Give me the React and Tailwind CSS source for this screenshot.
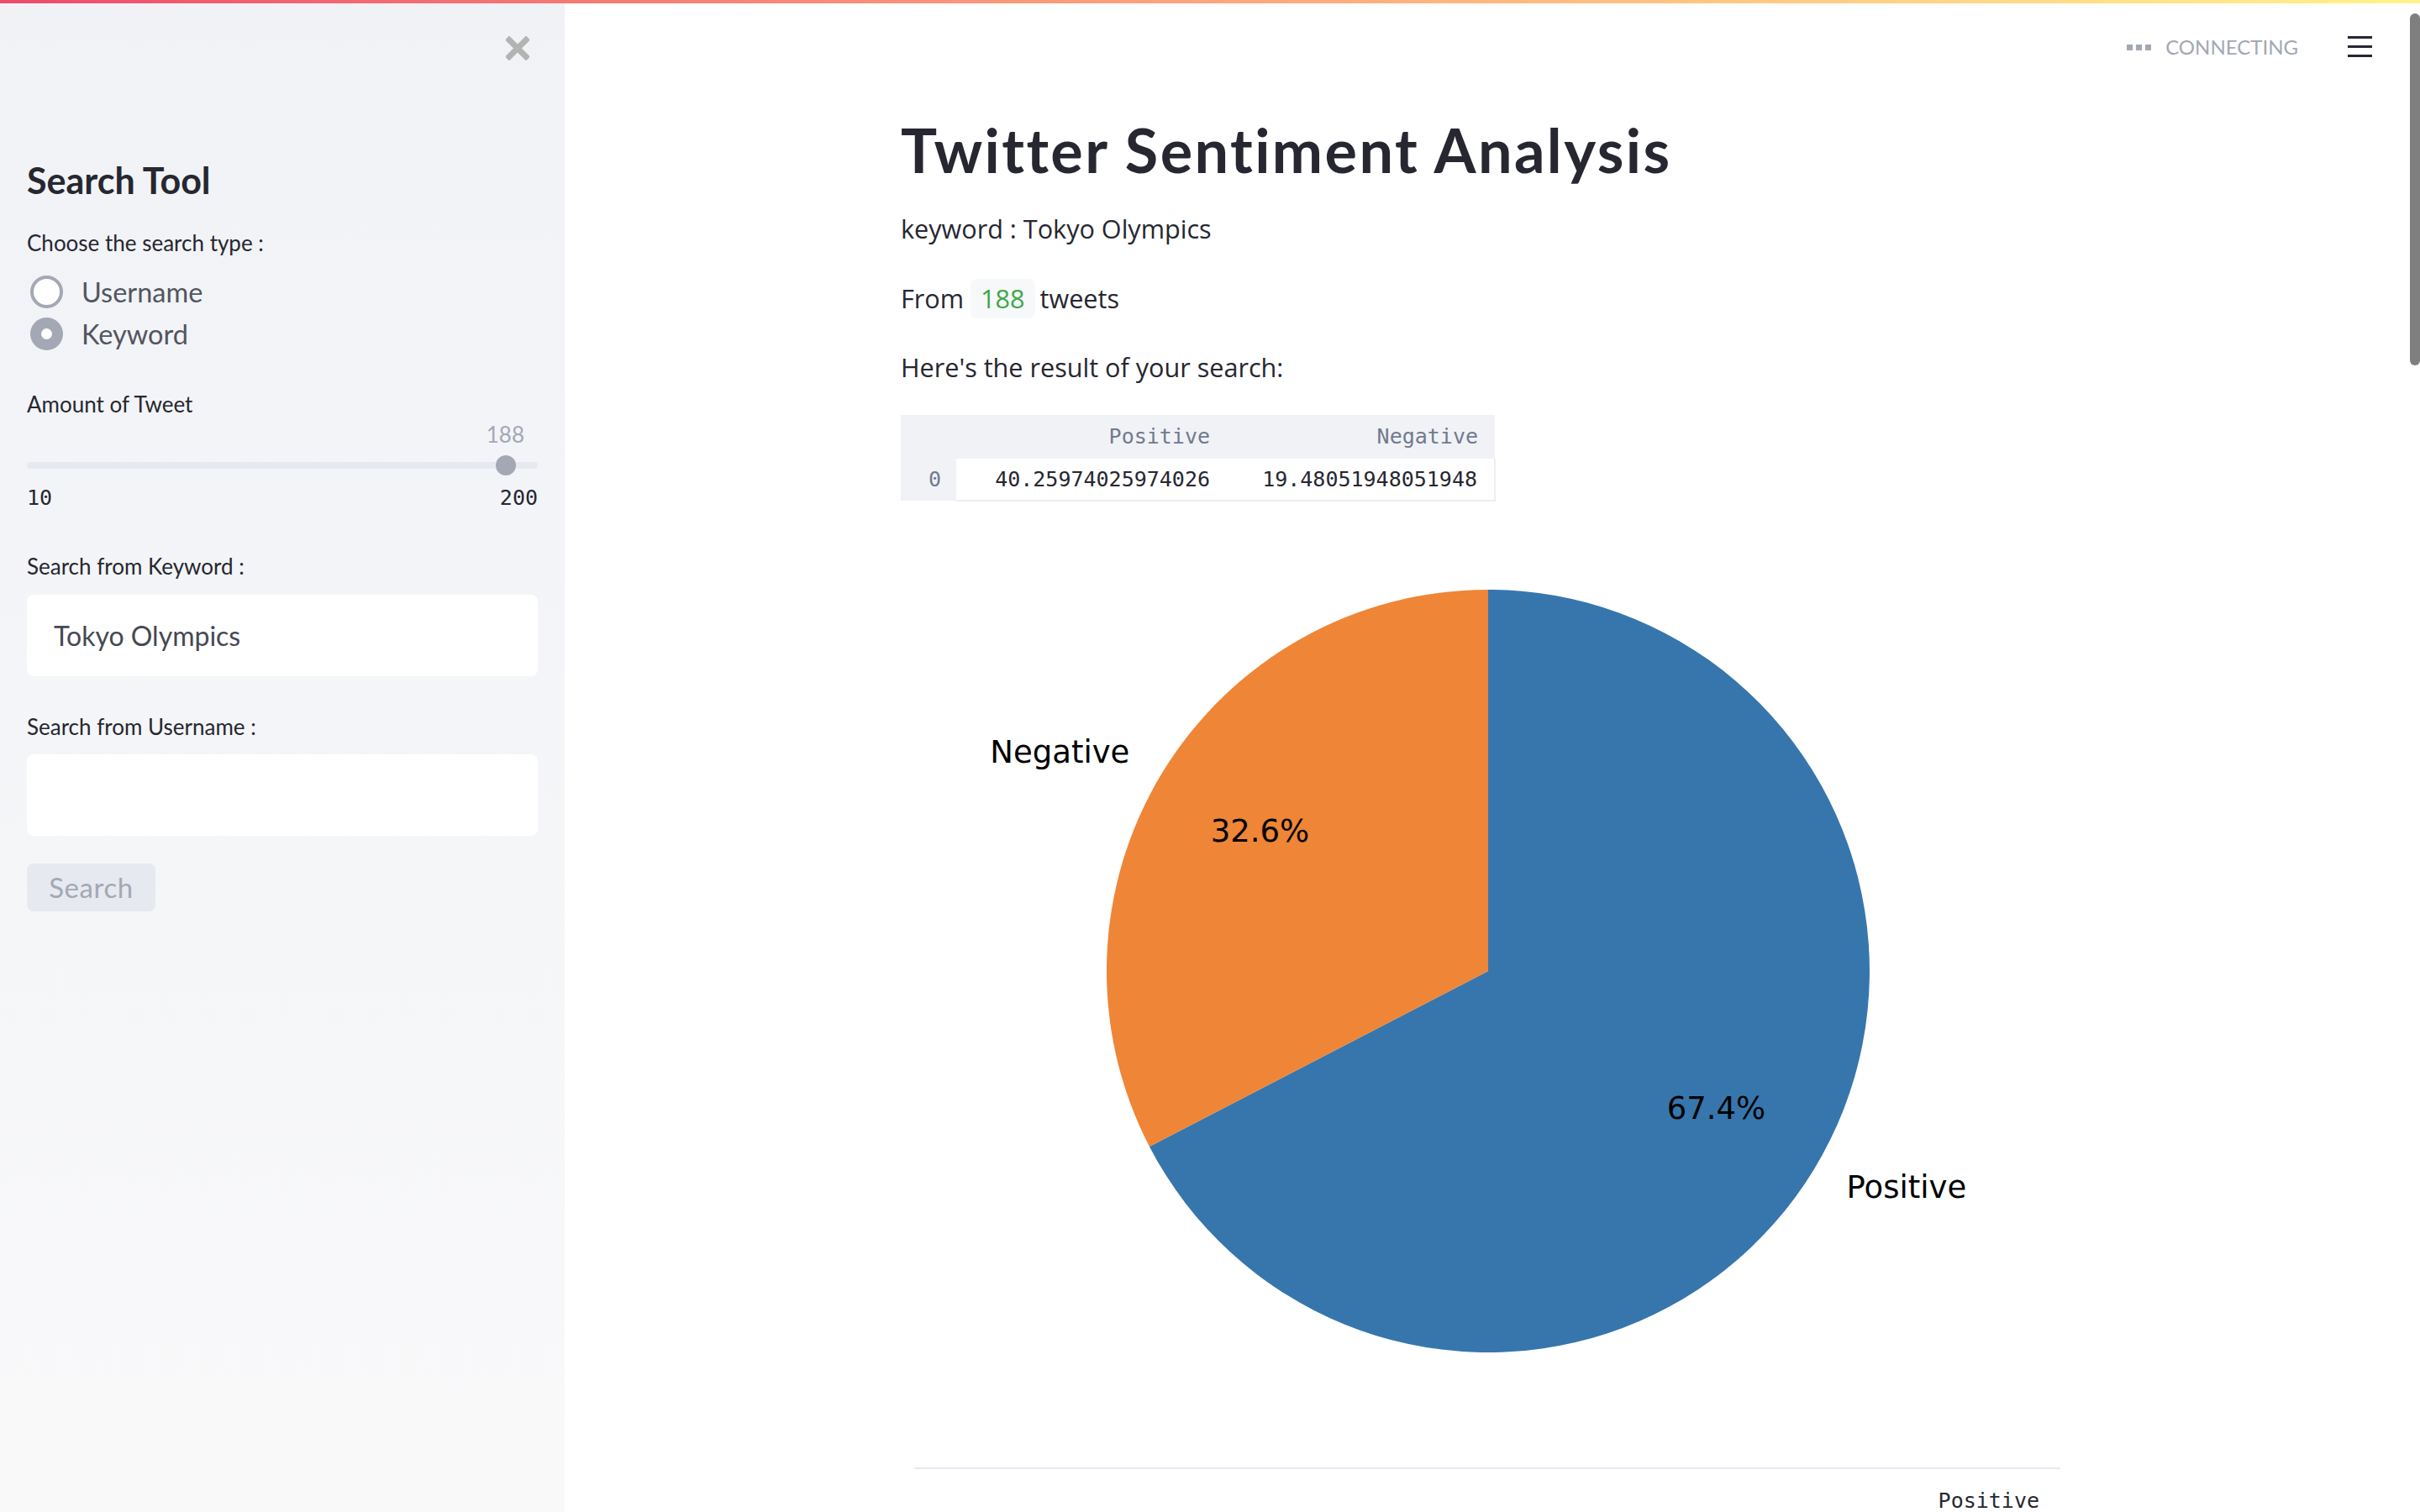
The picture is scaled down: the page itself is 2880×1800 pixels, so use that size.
const sans = "font-['Lato',sans-serif]"
const body = "font-['Open_Sans',sans-serif]"
const mono = "font-['DejaVu_Sans_Mono',monospace]"

const CloseIcon = () => (
  <svg width="28" height="29" viewBox="0 0 28 29">
    <path d="M4 4.5 L24 24.5 M24 4.5 L4 24.5" stroke="#b3b3b3" strokeWidth="7" strokeLinecap="square" />
  </svg>
)

const Radio = ({ label, checked }) => (
  <div className="flex items-center h-[39px] gap-[22px] pl-[4px]">
    {checked ? (
      <div className="w-[39px] h-[39px] rounded-full bg-[#a3a8b4] flex items-center justify-center">
        <div className="w-[13px] h-[13px] rounded-full bg-white" />
      </div>
    ) : (
      <div className="w-[39px] h-[39px] rounded-full bg-white border-[4px] border-[#a3a8b4]" />
    )}
    <span className="text-[32.5px] leading-[39px] text-[#53555f]">{label}</span>
  </div>
)

const Sidebar = () => (
  <aside className={`w-[672px] shrink-0 bg-gradient-to-b from-[#f0f2f6] to-[#f9f9fa] px-[32px] ${sans}`}>
    <div className="flex justify-end pt-[43px] pr-[10px]">
      <CloseIcon />
    </div>
    <h2 className="mt-[118px] text-[43px] leading-[50px] font-bold text-[#262730]">Search Tool</h2>
    <p className="mt-[32px] text-[26px] leading-[34px] text-[#262730]">Choose the search type :</p>
    <div className="mt-[22px] flex flex-col gap-[11px]">
      <Radio label="Username" />
      <Radio label="Keyword" checked />
    </div>
    <p className="mt-[47px] text-[26px] leading-[34px] text-[#262730]">Amount of Tweet</p>
    <div className="mt-[4px] flex justify-end pr-[16px] text-[26px] leading-[30px] text-[#a3a8b4]">188</div>
    <div className="mt-[10px] h-[24px] flex items-center">
      <div className="relative w-full h-[8px] rounded-full bg-[#e6e9ef]">
        <div className="absolute left-[558px] top-[-8px] w-[24px] h-[24px] rounded-full bg-[#a3a8b4]" />
      </div>
    </div>
    <div className={`mt-[12px] flex justify-between text-[25px] leading-[30px] text-[#262730] ${mono}`}>
      <span>10</span>
      <span>200</span>
    </div>
    <p className="mt-[49px] text-[26px] leading-[34px] text-[#262730]">Search from Keyword :</p>
    <div className="mt-[17px] h-[97px] rounded-[8px] bg-white flex items-center pl-[32px] text-[32px] text-[#464852]">
      Tokyo Olympics
    </div>
    <p className="mt-[43px] text-[26px] leading-[34px] text-[#262730]">Search from Username :</p>
    <div className="mt-[16px] h-[97px] rounded-[8px] bg-white" />
    <button className="mt-[33px] w-[153px] h-[57px] rounded-[8px] bg-[#e6e9f0] text-[33px] tracking-[0.6px] text-[#a3a8b4]">
      Search
    </button>
  </aside>
)

const Header = () => (
  <div className={`absolute top-0 right-0 h-[112px] flex items-center pr-[57px] ${sans}`}>
    <div className="flex gap-[4px]">
      <div className="w-[7px] h-[7px] bg-[#a3a8b4]" />
      <div className="w-[7px] h-[7px] bg-[#a3a8b4]" />
      <div className="w-[7px] h-[7px] bg-[#a3a8b4]" />
    </div>
    <span className="ml-[17px] text-[24px] text-[#a3a8b4]">CONNECTING</span>
    <svg className="ml-[59px]" width="29" height="26" viewBox="0 0 29 26">
      <path d="M0 1.5 H29 M0 12.5 H29 M0 23.5 H29" stroke="#262730" strokeWidth="3" />
    </svg>
  </div>
)

const PieChart = () => {
  const cx = 699
  const cy = 527
  const r = 454
  const ex = 295.9
  const ey = 735.9
  return (
    <svg width="1408" height="1080" viewBox="0 0 1408 1080" className="block">
      <path d={`M${cx} ${cy} L${cx} ${cy - r} A${r} ${r} 0 1 1 ${ex} ${ey} Z`} fill="#3776ad" />
      <path d={`M${cx} ${cy} L${cx} ${cy - r} A${r} ${r} 0 0 0 ${ex} ${ey} Z`} fill="#ef8536" />
      <g fontFamily="DejaVu Sans, sans-serif" fontSize="37" fill="#000" dominantBaseline="central">
        <text x="272.4" y="266" textAnchor="end">Negative</text>
        <text x="427.5" y="360" textAnchor="middle">32.6%</text>
        <text x="1125.6" y="784" textAnchor="start">Positive</text>
        <text x="970.5" y="690" textAnchor="middle">67.4%</text>
      </g>
    </svg>
  )
}

const ResultTable = () => (
  <table className={`mt-[37px] border-collapse text-[25px] ${mono}`}>
    <thead>
      <tr className="bg-[#f0f2f6] h-[52px] text-[#717a8e]">
        <th className="w-[66px]" />
        <th className="w-[322px] text-right pr-[20px] font-normal">Positive</th>
        <th className="w-[319px] text-right pr-[20px] font-normal">Negative</th>
      </tr>
    </thead>
    <tbody>
      <tr className="h-[50px]">
        <td className="bg-[#f0f2f6] text-right pr-[18px] text-[#717a8e]">0</td>
        <td className="bg-white text-right pr-[20px] text-[#262730] border-b-2 border-[#eceef3]">40.25974025974026</td>
        <td className="bg-white text-right pr-[20px] text-[#262730] border-b-2 border-r-2 border-[#eceef3]">19.48051948051948</td>
      </tr>
    </tbody>
  </table>
)

const App = () => {
  return (
    <div className="relative flex w-[2880px] h-[1800px] overflow-hidden bg-white">
      <div className="absolute top-0 left-0 right-0 h-[4px] bg-gradient-to-r from-[#ec4b6d] to-[#fff38a] z-10" />
      <Sidebar />
      <main className="relative flex-1 overflow-hidden">
        <Header />
        <div className={`mx-auto w-[1472px] px-[32px] pt-[136px] ${body} text-[#262730]`}>
          <h1 className={`text-[72px] leading-[84px] font-bold tracking-[2.4px] ${sans}`}>Twitter Sentiment Analysis</h1>
          <p className="mt-[32px] text-[30.6px] leading-[40px]">keyword : Tokyo Olympics</p>
          <div className="mt-[40px] flex items-center h-[47px] text-[30.6px]">
            <span>From</span>
            <span className="ml-[8px] h-[47px] px-[12px] rounded-[8px] bg-[#f7f8fa] text-[#3aa845] flex items-center">188</span>
            <span className="ml-[6px]">tweets</span>
          </div>
          <p className="mt-[38px] text-[30.6px] leading-[40px]">Here's the result of your search:</p>
          <ResultTable />
          <div className="mt-[32px]">
            <PieChart />
          </div>
          <div className="mt-[38px] ml-[16px] mr-[28px] border-t-2 border-[#e6e9ef]">
            <div className={`mt-[26px] flex justify-end pr-[25px] text-[25px] leading-[24px] ${mono}`}>Positive</div>
          </div>
        </div>
        <div className="absolute right-0 top-[16px] w-[12px] h-[419px] rounded-full bg-[#7f7f7f]" />
      </main>
    </div>
  )
}

export default App
